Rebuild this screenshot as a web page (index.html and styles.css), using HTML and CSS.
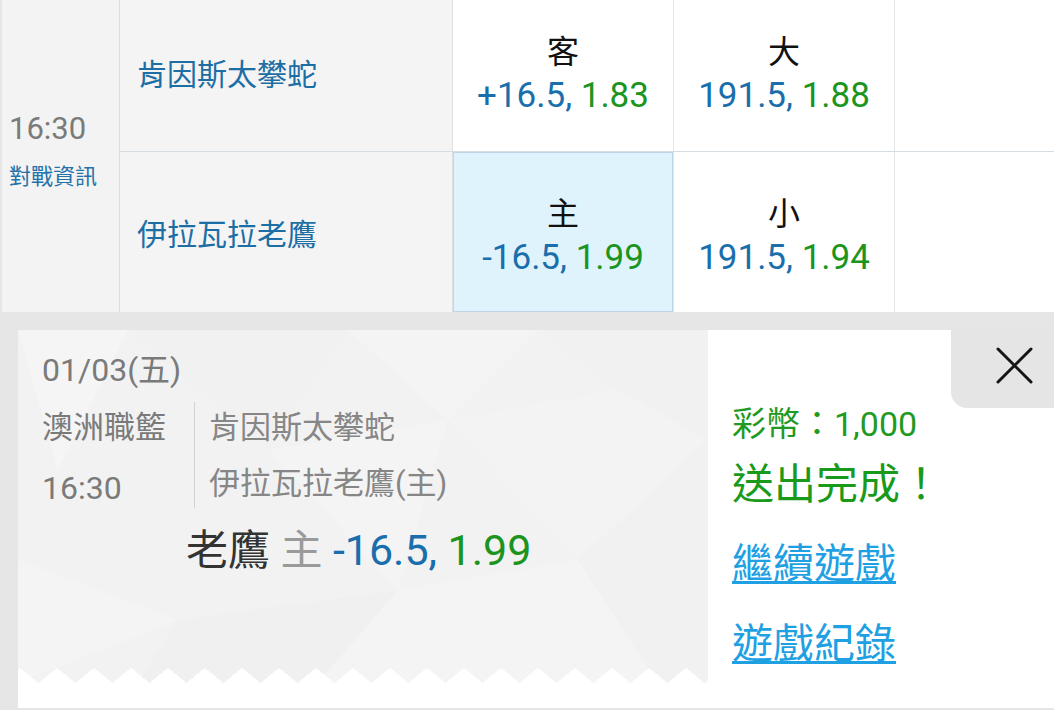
FILE: index.html
```html
<!DOCTYPE html>
<html lang="zh-Hant">
<head>
<meta charset="utf-8">
<title>投注完成</title>
<link rel="stylesheet" href="styles.css">
</head>
<body>
<div class="match">
  <div class="time-col">
    <div class="time">16:30</div>
    <div class="info">對戰資訊</div>
  </div>
  <div class="rows">
    <div class="row row1">
      <div class="team">肯因斯太攀蛇</div>
      <div class="cell">
        <div class="lbl">客</div>
        <div class="odds"><span class="b">+16.5,</span> <span class="g">1.83</span></div>
      </div>
      <div class="cell">
        <div class="lbl">大</div>
        <div class="odds"><span class="b">191.5,</span> <span class="g">1.88</span></div>
      </div>
      <div class="cell last"></div>
    </div>
    <div class="row row2">
      <div class="team">伊拉瓦拉老鷹</div>
      <div class="cell sel">
        <div class="lbl">主</div>
        <div class="odds"><span class="b">-16.5,</span> <span class="g">1.99</span></div>
      </div>
      <div class="cell">
        <div class="lbl">小</div>
        <div class="odds"><span class="b">191.5,</span> <span class="g">1.94</span></div>
      </div>
      <div class="cell last"></div>
    </div>
  </div>
</div>
<div class="bottom">
  <div class="panel">
    <div class="ticket">
      <svg class="poly" viewBox="0 0 690 353" preserveAspectRatio="none" aria-hidden="true">
        <polygon points="0,0 110,0 40,140" fill="#f5f5f5"/>
        <polygon points="110,0 330,0 250,120" fill="#f1f1f1"/>
        <polygon points="330,0 520,0 430,90" fill="#f4f4f4"/>
        <polygon points="520,0 690,0 690,110 600,60" fill="#f1f1f1"/>
        <polygon points="250,120 430,90 380,260" fill="#f4f4f4"/>
        <polygon points="430,90 600,60 690,110 560,230" fill="#f3f3f3"/>
        <polygon points="0,230 160,290 0,353" fill="#f4f4f4"/>
        <polygon points="160,290 380,260 300,353 120,353" fill="#f0f0f0"/>
        <polygon points="380,260 560,230 640,353 300,353" fill="#f4f4f4"/>
        <polygon points="560,230 690,110 690,353 640,353" fill="#f1f1f1"/>
      </svg>
      <div class="content">
        <div class="date">01/03(五)</div>
        <div class="meta">
          <div class="league">
            <div class="lg">澳洲職籃</div>
            <div class="lt">16:30</div>
          </div>
          <div class="divider"></div>
          <div class="teams">
            <div>肯因斯太攀蛇</div>
            <div>伊拉瓦拉老鷹(主)</div>
          </div>
        </div>
        <div class="bet"><span class="pick">老鷹</span> <span class="side">主</span> <span class="b">-16.5,</span> <span class="g">1.99</span></div>
      </div>
    </div>
    <div class="result">
      <div class="coins">彩幣：1,000</div>
      <div class="done">送出完成！</div>
      <a class="link first" href="#">繼續遊戲</a>
      <a class="link" href="#">遊戲紀錄</a>
    </div>
    <div class="close" role="button" aria-label="關閉">
      <svg width="37" height="37" viewBox="0 0 37 37" aria-hidden="true">
        <path d="M2 2 L35 35 M35 2 L2 35" stroke="#151515" stroke-width="3" stroke-linecap="round" fill="none"/>
      </svg>
    </div>
  </div>
</div>
</body>
</html>
```
FILE: styles.css
```css
* {
  box-sizing: border-box;
  margin: 0;
  padding: 0;
}

html,
body {
  width: 1054px;
  height: 710px;
  overflow: hidden;
}

body {
  font-family: Roboto, "Noto Sans CJK TC", sans-serif;
  background: #e6e6e6;
}

.match {
  display: flex;
  height: 312px;
  background: #fff;
}

.time-col {
  flex: 0 0 120px;
  width: 120px;
  background: #f3f3f3;
  border-left: 2px solid #e6e6e6;
  border-right: 1px solid #dedede;
  padding: 112px 0 0 7px;
}

.time {
  font-size: 31px;
  line-height: 34px;
  color: #7a7a7a;
}

.info {
  margin-top: 16px;
  font-size: 22px;
  line-height: 30px;
  color: #2372a9;
  white-space: nowrap;
}

.rows {
  flex: 1 1 auto;
  min-width: 0;
  display: flex;
  flex-direction: column;
}

.row {
  display: flex;
}

.row1 {
  height: 152px;
  border-bottom: 1px solid #d5dde2;
}

.row2 {
  height: 160px;
}

.team {
  flex: 0 0 333px;
  background: #f4f4f4;
  border-right: 1px solid #e0e0e0;
  padding-left: 17px;
  display: flex;
  align-items: center;
  font-size: 30px;
  color: #1c6ea4;
}

.row1 .team {
  padding-bottom: 8px;
}

.cell {
  flex: 0 0 221px;
  border-right: 1px solid #e0e6ea;
  display: flex;
  flex-direction: column;
  align-items: center;
  justify-content: center;
}

.row1 .cell {
  padding-bottom: 3px;
}

.row2 .cell {
  padding-top: 7px;
}

.cell.last {
  flex: 1 1 auto;
  border-right: 0;
}

.cell.sel {
  background: #dff3fc;
  box-shadow: inset 0 0 0 1px #bcd6e6;
}

.lbl {
  font-size: 32px;
  line-height: 44px;
  color: #111;
}

.odds {
  font-size: 35px;
  line-height: 44px;
  white-space: nowrap;
}

.b {
  color: #1a6eab;
}

.g {
  color: #1b9420;
}

.bottom {
  height: 398px;
  padding: 18px 0 2px 18px;
}

.panel {
  position: relative;
  height: 378px;
  background: #fff;
  display: flex;
}

.ticket {
  position: relative;
  flex: 0 0 690px;
  height: 353px;
  background: #f2f2f2;
  color: #7a7a7a;
}

.ticket::after {
  content: "";
  position: absolute;
  left: 0;
  right: 0;
  bottom: 0;
  height: 15px;
  background: conic-gradient(from 129deg at 50% 0, #fff 0deg 102deg, transparent 102deg);
  background-size: 37px 15px;
  background-position: -16.5px 0;
}

.poly {
  position: absolute;
  inset: 0;
  width: 100%;
  height: 100%;
}

.content {
  position: relative;
  padding: 20px 24px 0;
}

.date {
  font-size: 32px;
  line-height: 40px;
}

.meta {
  display: flex;
  align-items: flex-start;
  margin-top: 8px;
}

.league {
  flex: 0 0 152px;
  line-height: 60px;
}

.lg {
  font-size: 31px;
}

.lt {
  font-size: 32px;
}

.divider {
  flex: 0 0 1px;
  height: 106px;
  margin-top: 4px;
  background: #d2d2d2;
}

.teams {
  margin-top: 2px;
  padding-left: 14px;
  font-size: 31px;
  line-height: 56px;
  color: #868686;
}

.bet {
  margin-top: 7px;
  padding-left: 144px;
  font-size: 42px;
  line-height: 50px;
  white-space: nowrap;
}

.bet .b,
.bet .g {
  font-size: 43px;
}

.pick {
  color: #333;
}

.side {
  color: #9a9a9a;
}

.result {
  flex: 1 1 auto;
  padding: 74px 0 0 24px;
}

.coins {
  font-size: 34px;
  line-height: 40px;
  color: #1f9a22;
}

.done {
  margin-top: 13px;
  font-size: 42px;
  line-height: 56px;
  color: #1a9a1a;
}

.link {
  display: block;
  width: max-content;
  margin-top: 24px;
  font-size: 41px;
  line-height: 56px;
  color: #1ea0e3;
  text-decoration: underline;
  text-decoration-thickness: 3px;
  text-underline-offset: 3px;
}

.link.first {
  margin-top: 23px;
}

.close {
  position: absolute;
  top: 0;
  right: 0;
  width: 103px;
  height: 78px;
  padding: 17px 0 0 45px;
  background: #e5e5e5;
  border-bottom-left-radius: 16px;
}

.close svg {
  display: block;
}
```
